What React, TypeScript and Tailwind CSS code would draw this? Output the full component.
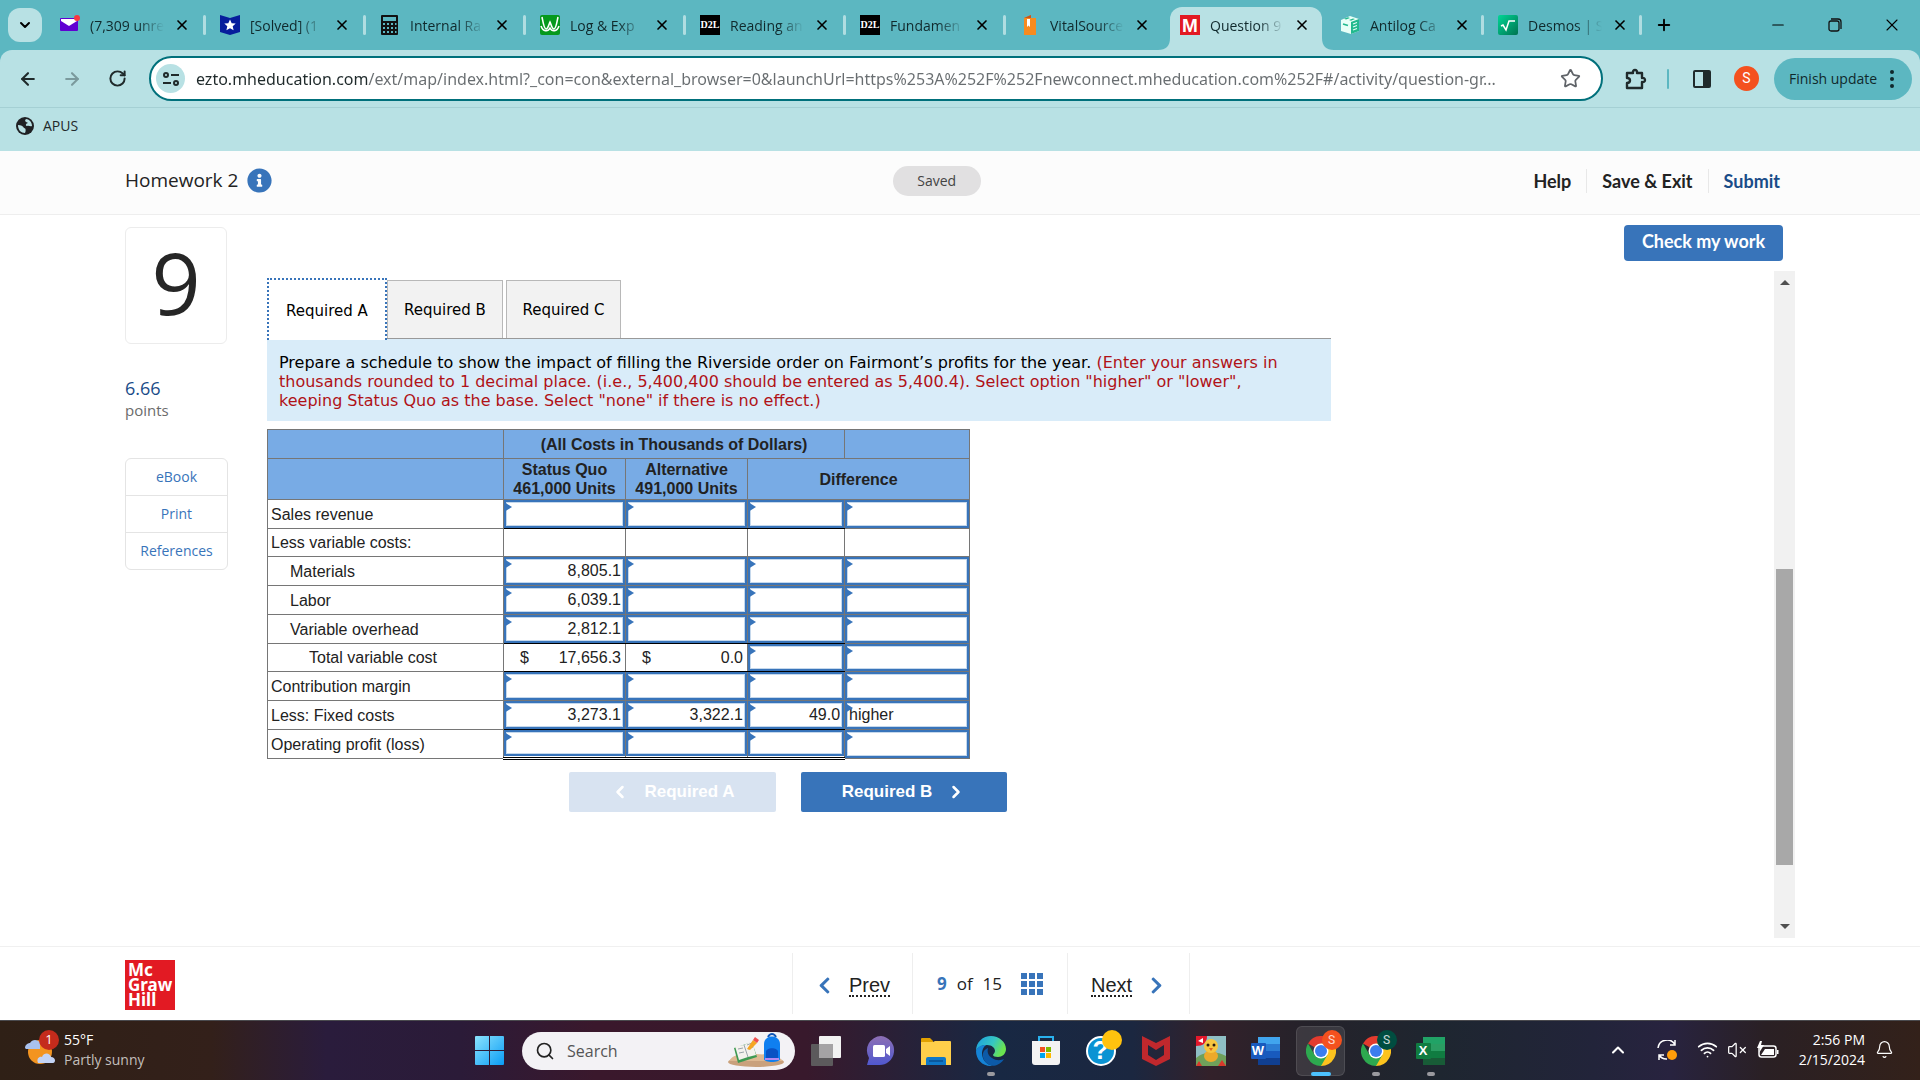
import type { ReactNode } from 'react';
import {
  ArrowLeft,
  ArrowRight,
  Bell,
  ChevronDown,
  ChevronLeft,
  ChevronRight,
  ChevronUp,
  Minus,
  Plus,
  RotateCw,
  Search,
  Star,
  VolumeX,
  Wifi,
  X,
} from 'lucide-react';
import { FaChevronLeft, FaChevronRight, FaInfoCircle } from 'react-icons/fa';

/* ---------- favicons ---------- */

const MailIcon = () => (
  <svg viewBox="0 0 20 20" className="size-5">
    <rect x="0" y="3" width="18" height="13" rx="1" fill="#6001d2" />
    <path d="M1 4h16v2l-8 5-8-5z" fill="#fff" />
    <circle cx="17" cy="3" r="3" fill="#f9363e" />
  </svg>
);

const ShieldIcon = () => (
  <svg viewBox="0 0 20 20" className="size-5">
    <path d="M0 0l10 3L20 0v17l-10 3-10-3z" fill="#071d9c" />
    <path d="M10 4.500l1.700 3.700 4 .4-3 2.700.9 4-3.600-2.100-3.600 2.100.9-4-3-2.700 4-.4z" fill="#fff" />
  </svg>
);

const CalculatorIcon = () => (
  <svg viewBox="0 0 20 20" className="size-5">
    <rect x="1" y="0" width="17" height="20" rx="1" fill="#111" />
    <rect x="3" y="2" width="13" height="4" fill="#5cb7c1" />
    <path
      d="M3 8h2v2H3zM7 8h2v2H7zM11 8h2v2h-2zM15 8h1.500v2H15zM3 12h2v2H3zM7 12h2v2H7zM11 12h2v2h-2zM15 12h1.500v2H15zM3 16h2v2H3zM7 16h2v2H7zM11 16h2v2h-2zM15 16h1.500v2H15z"
      fill="#5cb7c1"
    />
  </svg>
);

const GraphIcon = () => (
  <svg viewBox="0 0 20 20" className="size-5">
    <rect width="20" height="20" rx="2" fill="#05991c" />
    <path d="M2 2c1 5 2 12 4 12s3-5 4-7c1 2 2 7 4 7s3-7 4-12M1 11c2 6 7 6 9 2 2 4 7 4 9-2" fill="none" stroke="#fff" strokeWidth="1.600" />
  </svg>
);

const D2LIcon = () => (
  <span className="flex size-5 items-center justify-center bg-black font-['Liberation_Serif',serif] text-[10px] leading-none font-bold text-white">
    D2L
  </span>
);

const BookIcon = () => (
  <svg viewBox="0 0 20 20" className="size-5">
    <path d="M4 3l7-3v3h5v17H4z" fill="#f68b1f" />
    <path d="M4 3l7-3v3z" fill="#c9541b" />
    <path d="M7 4h3v8l-1.500-1.500L7 12z" fill="#fff" />
  </svg>
);

const McGrawIcon = () => (
  <span className="flex size-5 items-center justify-center bg-[#e21a23] font-['Liberation_Sans',sans-serif] text-[19px] leading-none font-bold text-white">
    M
  </span>
);

const CubeIcon = () => (
  <svg viewBox="0 0 20 20" className="size-5">
    <path d="M1 5l9-4 9 3v12l-8 3-10-3z" fill="#e8fff7" />
    <path d="M11 7l8-3v12l-8 3z" fill="#22b98e" />
    <path d="M4 3.800l4-1.600 2 .8-4 1.600zM9 5l4-1.600 2 .7-4 1.700z" fill="#22b98e" />
    <path d="M13 9l4-1.500M13 12l4-1.500M13 15l4-1.500" stroke="#e8fff7" strokeWidth="1.200" />
    <path d="M3 9l5 1.500" stroke="#22b98e" strokeWidth="1.600" />
  </svg>
);

const DesmosIcon = () => (
  <svg viewBox="0 0 20 20" className="size-5">
    <defs>
      <linearGradient id="desmos" x1="0" y1="0" x2="1" y2="1">
        <stop offset="0" stopColor="#00d796" />
        <stop offset="1" stopColor="#00724f" />
      </linearGradient>
    </defs>
    <rect width="20" height="20" rx="2" fill="url(#desmos)" />
    <path d="M3 11l2-1 3 5 3-9h6" fill="none" stroke="#fff" strokeWidth="1.500" />
  </svg>
);

/* ---------- browser chrome ---------- */

interface BrowserTab {
  title: string;
  icon: ReactNode;
  active?: boolean;
  divider?: boolean;
  narrow?: boolean;
}

const browserTabs: BrowserTab[] = [
  { title: '(7,309 unre', icon: <MailIcon />, divider: true },
  { title: '[Solved] (1', icon: <ShieldIcon />, divider: true },
  { title: 'Internal Ra', icon: <CalculatorIcon />, divider: true },
  { title: 'Log & Exp', icon: <GraphIcon />, divider: true },
  { title: 'Reading an', icon: <D2LIcon />, divider: true },
  { title: 'Fundamen', icon: <D2LIcon />, divider: true },
  { title: 'VitalSource', icon: <BookIcon /> },
  { title: 'Question 9', icon: <McGrawIcon />, active: true },
  { title: 'Antilog Ca', icon: <CubeIcon />, divider: true, narrow: true },
  { title: 'Desmos | S', icon: <DesmosIcon />, divider: true, narrow: true },
];

function TabStrip() {
  return (
    <div className="flex h-[50px] items-stretch bg-[#5cb7c1] pl-2">
      <button aria-label="Search tabs" className="mt-2 mr-1 flex size-[34px] items-center justify-center rounded-xl bg-[#b8e1e4]">
        <ChevronDown className="size-4" strokeWidth={3} />
      </button>
      {browserTabs.map((tab, index) => (
        <div
          key={index}
          className={`relative flex items-center pl-[14px] ${tab.narrow ? 'w-[158px]' : 'w-40'} ${tab.active ? 'before:absolute before:inset-x-1 before:top-[7px] before:bottom-0 before:rounded-t-xl before:bg-[#b8e1e4]' : ''}`}
        >
          {tab.active && (
            <svg viewBox="0 0 176 12" preserveAspectRatio="none" className="absolute -left-2 bottom-0 h-3 w-44">
              <path d="M0 12c8 0 12-4 12-12h152c0 8 4 12 12 12z" fill="#b8e1e4" />
            </svg>
          )}
          <span className="relative flex shrink-0">{tab.icon}</span>
          <span className="relative ml-[10px] w-[74px] text-[14px] whitespace-nowrap text-[#10292c] [mask-image:linear-gradient(to_right,black_65%,transparent)]">
            {tab.title}
          </span>
          <button aria-label={`Close ${tab.title}`} className="relative ml-[10px] flex size-4 items-center justify-center">
            <X className="size-4" strokeWidth={2.5} />
          </button>
          {tab.divider && <span className="ml-auto h-5 w-[3px] rounded bg-[#b0dde1]" />}
        </div>
      ))}
      <button aria-label="New tab" className="ml-3 flex w-5 items-center justify-center">
        <Plus className="size-[18px]" strokeWidth={2.5} />
      </button>
      <div className="ml-auto flex shrink-0">
        <button aria-label="Minimize" className="flex w-[57px] items-center justify-center">
          <Minus className="size-[18px]" strokeWidth={1.5} />
        </button>
        <button aria-label="Restore" className="flex w-[57px] items-center justify-center">
          <svg viewBox="0 0 14 14" className="size-[14px]" fill="none" stroke="#111" strokeWidth="1.300">
            <rect x="1" y="3" width="10" height="10" rx="2" />
            <path d="M3 1h7a3 3 0 0 1 3 3v7" />
          </svg>
        </button>
        <button aria-label="Close" className="flex w-[57px] items-center justify-center">
          <X className="size-5" strokeWidth={1.3} />
        </button>
      </div>
    </div>
  );
}

const address =
  'ezto.mheducation.com/ext/map/index.html?_con=con&external_browser=0&launchUrl=https%253A%252F%252Fnewconnect.mheducation.com%252F#/activity/question-gr...';

function Toolbar() {
  return (
    <div className="bg-[#5cb7c1]">
      <div className="rounded-t-xl bg-[#b8e1e4]">
        <div className="flex h-[58px] items-center border-b border-[#a5d0d4] pr-2 pl-4">
          <button aria-label="Back" className="flex w-6 justify-center text-[#1f2a2b]">
            <ArrowLeft className="size-5" strokeWidth={2.5} />
          </button>
          <button aria-label="Forward" className="ml-5 flex w-6 justify-center text-[#7b9a9d]">
            <ArrowRight className="size-5" strokeWidth={2.5} />
          </button>
          <button aria-label="Reload" className="ml-[21px] flex w-6 justify-center text-[#1f2a2b]">
            <RotateCw className="size-[19px]" strokeWidth={2.5} />
          </button>
          <div className="ml-5 flex h-[45px] flex-1 items-center rounded-full border-2 border-[#00707b] bg-white pr-5 pl-[5px]">
            <button aria-label="Site information" className="flex size-[29px] shrink-0 items-center justify-center rounded-full bg-[#b8e1e4]">
              <svg viewBox="0 0 18 16" className="h-4 w-[18px]" fill="none" stroke="#1f2a2b" strokeWidth="2">
                <circle cx="4" cy="4" r="2" />
                <path d="M9 4h8M1 12h8" />
                <circle cx="14" cy="12" r="2" />
              </svg>
            </button>
            <input
              aria-label="Address"
              defaultValue={address}
              className="ml-[11px] w-0 flex-1 bg-[linear-gradient(to_right,#1f2a2b_173px,#686d70_173px)] bg-clip-text font-['Noto_Sans',sans-serif] text-[16px] text-transparent outline-none"
            />
            <button aria-label="Bookmark this page">
              <Star className="size-[21px] text-[#5f6368]" />
            </button>
          </div>
          <button aria-label="Extensions" className="ml-[21px] flex w-6 justify-center">
            <svg viewBox="0 0 22 22" className="size-[22px]" fill="none" stroke="#1f2a2b" strokeWidth="2.400" strokeLinejoin="round">
              <path d="M2 5h6c-1-4 5-4 4 0h5v5c4-1 4 5 0 4v6H2v-5c4 0 4-5 0-5z" />
            </svg>
          </button>
          <span className="mx-[19px] h-5 w-[2px] rounded bg-[#5cb7c1]" />
          <button aria-label="Side panel" className="ml-[2px] flex w-6 justify-center">
            <svg viewBox="0 0 18 18" className="size-[18px]">
              <rect x="1" y="1" width="16" height="16" rx="1" fill="none" stroke="#1f2a2b" strokeWidth="2" />
              <rect x="10" y="1" width="7" height="16" fill="#1f2a2b" />
            </svg>
          </button>
          <button className="ml-5 flex size-[25px] items-center justify-center rounded-full bg-[#f4511e] font-[Roboto,sans-serif] text-[14px] text-white">
            S
          </button>
          <button className="ml-[15px] flex h-[42px] w-[138px] items-center justify-between rounded-full bg-[#5cb7c1] pr-[18px] pl-[15px] text-[14px] whitespace-nowrap text-[#10292c]">
            Finish update
            <svg viewBox="0 0 4 20" className="h-5 w-1" fill="#10292c">
              <circle cx="2" cy="3" r="2" />
              <circle cx="2" cy="10" r="2" />
              <circle cx="2" cy="17" r="2" />
            </svg>
          </button>
        </div>
        <div className="flex h-[43px] items-center pb-2 pl-4">
          <a href="#apus" className="flex items-center gap-[9px] text-[14px] text-[#1f2a2b]">
            <svg viewBox="0 0 18 18" className="size-[18px]">
              <circle cx="9" cy="9" r="9" fill="#1f2124" />
              <path d="M2 8c3 0 5 1 6 3 2 0 2 3 1 5-4 0-7-3-7-8z" fill="#b8e1e4" />
              <path d="M10 2c3 0 6 3 6 7-2 1-3-1-5 0-2 0-1-3 1-3-2-1-4-2-2-4z" fill="#b8e1e4" />
            </svg>
            APUS
          </a>
        </div>
      </div>
    </div>
  );
}

/* ---------- assignment ---------- */

function AssignmentHeader() {
  return (
    <header className="grid h-16 grid-cols-3 items-center border-b border-[#eeeeee] bg-[#fcfcfc] px-[125px] pb-1">
      <div className="flex items-center gap-[9px]">
        <h1 className="text-[19px] text-[#222]">Homework 2</h1>
        <button aria-label="Assignment information">
          <FaInfoCircle className="size-[25px] text-[#3874ba]" />
        </button>
      </div>
      <span className="ml-[211px] flex h-[30px] w-[88px] items-center justify-center rounded-full bg-[#e1e0e1] text-[14px] text-[#444]">
        Saved
      </span>
      <nav className="flex items-center justify-end pr-[15px] font-[Lato,sans-serif] text-[18px] leading-6 font-bold text-[#222]">
        <a href="#help" className="border-r border-[#e8e8e8] pr-[15px]">Help</a>
        <a href="#exit" className="border-r border-[#e8e8e8] px-[15px]">Save &amp; Exit</a>
        <a href="#submit" className="pl-[15px] text-[#1a4c88]">Submit</a>
      </nav>
    </header>
  );
}

function QuestionInfo() {
  return (
    <aside className="w-[103px] shrink-0 pt-3">
      <div className="flex h-[117px] w-[102px] items-center justify-center rounded-md border border-[#ececec] pb-2 text-[86px] leading-none text-[#262626]">
        9
      </div>
      <p className="mt-8 text-[18px] leading-6 text-[#1a4c88]">6.66</p>
      <p className="text-[15px] leading-5 text-[#6b6b6b]">points</p>
      <div className="mt-[38px] divide-y divide-[#e4e4e4] rounded-md border border-[#e4e4e4] text-center text-[14px] leading-9 text-[#3874ba]">
        <a href="#ebook" className="block">eBook</a>
        <a href="#print" className="block">Print</a>
        <a href="#references" className="block">References</a>
      </div>
    </aside>
  );
}

interface AnswerCellProps {
  label: string;
  value?: string;
  align: 'left' | 'right';
  rule: string;
  height: string;
}

function AnswerCell({ label, value = '', align, rule, height }: AnswerCellProps) {
  return (
    <td className={`relative border border-[#767676] p-0 align-top ${rule}`}>
      <input
        aria-label={label}
        defaultValue={value}
        className={`block w-full border-2 border-[#3874ba] bg-white px-[2px] shadow-[inset_0_0_0_1px_#c5d8ec] outline-none ${height} ${align === 'left' ? 'text-left' : 'text-right'}`}
      />
      <span className="absolute top-[2px] left-0 border-y-[5px] border-l-[8px] border-y-transparent border-l-[#3874ba]" />
    </td>
  );
}

function TotalCell({ value, rule }: { value: string; rule: string }) {
  return (
    <td className={`border border-[#767676] p-0 pr-1 pl-4 ${rule}`}>
      <div className="flex justify-between">
        <span>$</span>
        <span>{value}</span>
      </div>
    </td>
  );
}

interface ScheduleRow {
  label: string;
  indent?: string;
  kind?: 'blank' | 'total' | 'last';
  values?: string[];
  rule?: string;
}

const rows: ScheduleRow[] = [
  { label: 'Sales revenue', rule: 'border-b-black' },
  { label: 'Less variable costs:', kind: 'blank' },
  { label: 'Materials', indent: 'pl-[22px]', values: ['8,805.1'] },
  { label: 'Labor', indent: 'pl-[22px]', values: ['6,039.1'] },
  { label: 'Variable overhead', indent: 'pl-[22px]', values: ['2,812.1'], rule: 'border-b-black' },
  { label: 'Total variable cost', indent: 'pl-[41px]', kind: 'total', values: ['17,656.3', '0.0'], rule: 'border-b-black' },
  { label: 'Contribution margin' },
  { label: 'Less: Fixed costs', values: ['3,273.1', '3,322.1', '49.0', 'higher'], rule: 'border-b-black' },
  { label: 'Operating profit (loss)', kind: 'last', rule: 'border-b-[3px] border-b-black [border-bottom-style:double]' },
];

const columns = ['Status Quo', 'Alternative', 'Difference', 'Effect'];

const inputHeights = { blank: 'h-[27px]', total: 'h-[27px]', last: 'h-[26px]', normal: 'h-7' };

function ScheduleTable() {
  return (
    <table className="mt-2 w-[703px] table-fixed border-collapse font-['Liberation_Sans',sans-serif] text-[16px] leading-[19px] text-[#222]">
      <colgroup>
        <col className="w-[236px]" />
        <col className="w-[122px]" />
        <col className="w-[122px]" />
        <col className="w-[97px]" />
        <col className="w-[125px]" />
      </colgroup>
      <thead className="bg-[#78abe5]">
        <tr className="h-[29px]">
          <td className="border border-[#767676]" />
          <th colSpan={3} className="border border-[#767676] p-0">(All Costs in Thousands of Dollars)</th>
          <td className="border border-[#767676]" />
        </tr>
        <tr className="h-[41px]">
          <td className="border border-[#767676]" />
          <th className="border border-[#767676] p-0">Status Quo 461,000 Units</th>
          <th className="border border-[#767676] p-0">Alternative 491,000 Units</th>
          <th colSpan={2} className="border border-[#767676] p-0">Difference</th>
        </tr>
      </thead>
      <tbody>
        {rows.map(row => (
          <tr key={row.label} className={row.kind ? 'h-7' : 'h-[29px]'}>
            <th scope="row" className={`border border-[#767676] p-0 text-left font-normal ${row.indent ?? 'pl-[3px]'}`}>
              {row.label}
            </th>
            {columns.map((column, i) => {
              const rule = i < 3 ? row.rule ?? '' : '';
              if (row.kind === 'blank') {
                return <td key={column} className="border border-[#767676]" />;
              }
              if (row.kind === 'total' && i < 2) {
                return <TotalCell key={column} value={row.values?.[i] ?? ''} rule={rule} />;
              }
              return (
                <AnswerCell
                  key={column}
                  label={`${row.label} ${column}`}
                  value={row.kind === 'total' ? '' : row.values?.[i]}
                  align={i === 3 ? 'left' : 'right'}
                  rule={rule}
                  height={i === 3 && row.kind === 'last' ? 'h-7' : inputHeights[row.kind ?? 'normal']}
                />
              );
            })}
          </tr>
        ))}
      </tbody>
    </table>
  );
}

function QuestionBody() {
  return (
    <main className="w-[1064px] pt-[7px]">
      <div role="tablist" className="flex border-b border-[#999] font-['DejaVu_Sans',sans-serif] text-[15px] text-black">
        <button role="tab" aria-selected="true" className="-mb-[2px] h-[62px] w-[120px] border-2 border-b-0 border-dotted border-[#3874ba] bg-white pt-[2px]">
          Required A
        </button>
        <button role="tab" aria-selected="false" className="mt-[2px] h-[58px] w-[116px] border border-b-0 border-[#b8b8b8] bg-[#f2f2f2] pt-[2px]">
          Required B
        </button>
        <button role="tab" aria-selected="false" className="mt-[2px] ml-[3px] h-[58px] w-[115px] border border-b-0 border-[#b8b8b8] bg-[#f2f2f2] pt-[2px]">
          Required C
        </button>
      </div>
      <p className="h-[82px] bg-[#d9ecf9] pt-[14px] pr-8 pl-3 font-['DejaVu_Sans',sans-serif] text-[16px] leading-[19px] text-black">
        Prepare a schedule to show the impact of filling the Riverside order on Fairmont’s profits for the year.{' '}
        <span className="text-[#b01217]">
          (Enter your answers in thousands rounded to 1 decimal place. (i.e., 5,400,400 should be entered as 5,400.4). Select
          option "higher" or "lower", keeping Status Quo as the base. Select "none" if there is no effect.)
        </span>
      </p>
      <ScheduleTable />
      <div className="mt-3 ml-[302px] flex gap-[25px] font-['Liberation_Sans',sans-serif] text-[17px] font-bold text-white">
        <button disabled className="flex h-10 w-[207px] items-center justify-center gap-[14px] rounded-xs bg-[#d8e3f1]">
          <ChevronLeft className="size-5" strokeWidth={3} />
          Required A
        </button>
        <button className="flex h-10 w-[206px] items-center justify-center gap-[14px] rounded-xs bg-[#3874ba]">
          Required B
          <ChevronRight className="size-5" strokeWidth={3} />
        </button>
      </div>
    </main>
  );
}

function ScrollTrack() {
  return (
    <div className="flex w-[21px] flex-col items-center bg-[#f1f1f1]">
      <span className="mt-[9px] border-x-[5px] border-b-[5px] border-x-transparent border-b-[#505050]" />
      <span className="grow-[284]" />
      <span className="w-[17px] grow-[296] bg-[#a8a8a8]" />
      <span className="grow-[59]" />
      <span className="mb-[9px] border-x-[5px] border-t-[5px] border-x-transparent border-t-[#505050]" />
    </div>
  );
}

function AssignmentFooter() {
  return (
    <footer className="grid h-[74px] grid-cols-[1fr_auto_1fr] border-t border-[#f0f0f0] bg-white px-[125px]">
      <div className="mt-[13px] flex size-[50px] flex-col justify-center bg-[#e21a23] pb-[2px] pl-[3px] font-['Noto_Sans',sans-serif] text-[17px] leading-[15px] font-bold text-white">
        <span>Mc</span>
        <span>Graw</span>
        <span>Hill</span>
      </div>
      <nav className="my-[6px] ml-[62px] flex items-stretch divide-x divide-[#eeeeee] border-x border-[#eeeeee] font-['Liberation_Sans',sans-serif] text-[20px] text-[#222]">
        <a href="#prev" className="flex w-[120px] items-center justify-center gap-[15px] pt-1">
          <FaChevronLeft className="size-[19px] text-[#3874ba]" />
          <span className="border-b-2 border-dotted border-[#222] leading-5">Prev</span>
        </a>
        <div className="flex w-[155px] items-center justify-center gap-[10px] font-['Open_Sans',sans-serif] text-[17px]">
          <b className="text-[#3874ba]">9</b>
          <span>of</span>
          <span>15</span>
          <button aria-label="Question list" className="ml-[9px] grid grid-cols-3 gap-[2px]">
            {Array.from({ length: 9 }, (_, i) => (
              <span key={i} className="size-[6px] bg-[#3874ba]" />
            ))}
          </button>
        </div>
        <a href="#next" className="flex w-[121px] items-center justify-center gap-[15px] pt-1">
          <span className="border-b-2 border-dotted border-[#222] leading-5">Next</span>
          <FaChevronRight className="size-[19px] text-[#3874ba]" />
        </a>
      </nav>
    </footer>
  );
}

/* ---------- taskbar ---------- */

const WindowsIcon = () => (
  <svg viewBox="0 0 30 30" className="size-[30px]">
    <defs>
      <linearGradient id="win" x1="0" y1="0" x2="1" y2="1">
        <stop offset="0" stopColor="#8be3fd" />
        <stop offset="1" stopColor="#0a9cf5" />
      </linearGradient>
    </defs>
    <path d="M0 1a1 1 0 0 1 1-1h13v14H0zM15 0h13a1 1 0 0 1 1 1v13H15zM0 15h14v14H1a1 1 0 0 1-1-1zM15 15h14v13a1 1 0 0 1-1 1H15z" fill="url(#win)" />
  </svg>
);

const BackpackArt = () => (
  <svg viewBox="0 0 60 36" className="h-9 w-[60px]">
    <ellipse cx="29" cy="29" rx="28" ry="5" fill="#c9a17c" />
    <path d="M2 28c4-7 14-8 26-7s20-1 28 7z" fill="#deb992" />
    <path d="M7 15l18-6 5 15-19 6z" fill="#3e9a52" />
    <path d="M8 13l9-1 8-4 4 14-8 2-9 3z" fill="#f4f2ee" />
    <path d="M17 12l4 12M11 16l5-1M12 20l5-1M20 12l5-2M21 16l5-2" stroke="#9aa4ab" />
    <path d="M20 16l6-9 4 3-7 7z" fill="#f5a623" />
    <path d="M26 7l2-3 4 3-2 3z" fill="#ee4e4e" />
    <path d="M41 4c2-4 6-4 8 0" fill="none" stroke="#1257b8" strokeWidth="2" />
    <path d="M37 11c0-10 16-10 16 0v15c0 4-16 4-16 0z" fill="#0f7ff0" />
    <path d="M39 19c0-5 12-5 12 0v6H39z" fill="#0a52c4" />
    <path d="M38 25h14v2H38z" fill="#b58af0" />
  </svg>
);

const TaskViewIcon = () => (
  <svg viewBox="0 0 30 30" className="size-[30px]">
    <rect x="8" y="0" width="22" height="22" rx="1" fill="#f2f2f2" />
    <rect x="0" y="8" width="22" height="22" rx="1" fill="#5c5a5c" />
    <rect x="8" y="8" width="14" height="14" fill="#a5a3a5" />
  </svg>
);

const ChatIcon = () => (
  <svg viewBox="0 0 30 30" className="size-[30px]">
    <defs>
      <linearGradient id="chat" x1="0" y1="0" x2="0" y2="1">
        <stop offset="0" stopColor="#8d6fb4" />
        <stop offset="1" stopColor="#5058cf" />
      </linearGradient>
    </defs>
    <path d="M15 0a14.500 14.500 0 1 1-3 29H1l2-7A14.500 14.500 0 0 1 15 0z" fill="url(#chat)" />
    <rect x="7" y="9" width="12" height="12" rx="1.500" fill="#fff" />
    <path d="M20 13l4-3v10l-4-3z" fill="#fff" />
  </svg>
);

const ExplorerIcon = () => (
  <svg viewBox="0 0 30 30" className="size-[30px]">
    <path d="M0 3a1 1 0 0 1 1-1h8l3 3v5H0z" fill="#e2a100" />
    <path d="M0 6h12l2-1h15a1 1 0 0 1 1 1v23H0z" fill="#ffcf4a" />
    <path d="M5 29v-6a2 2 0 0 1 2-2h16a2 2 0 0 1 2 2v6z" fill="#0f78c8" />
    <path d="M8 25h14" stroke="#0a4f90" strokeWidth="1.500" />
  </svg>
);

const EdgeIcon = () => (
  <svg viewBox="0 0 30 30" className="size-[30px]">
    <defs>
      <linearGradient id="edge-top" x1="0" y1="0" x2="1" y2=".4">
        <stop offset="0" stopColor="#1b9de2" />
        <stop offset=".6" stopColor="#36c6c2" />
        <stop offset="1" stopColor="#6be34f" />
      </linearGradient>
    </defs>
    <path d="M0 15C0 6 7 0 15 0s15 6 15 13c0 5-4 8-8 8-3 0-5-1-5-2s2-2 2-4c0-3-3-6-8-6-6 0-10 3-11 6z" fill="url(#edge-top)" />
    <path d="M0 15c1-4 5-6 10-6-3 2-4 6-4 8 0 7 5 12 11 12.800C7 31 0 24 0 15z" fill="#1583d6" />
    <path d="M12 12c-3 1-6 4-5 9 1 5 6 9 11 8.700 4-.5 8-3 10-6.700-3 1.500-8 2-12-1-4-2.500-5-6-4-10z" fill="#0c5aa8" />
  </svg>
);

const StoreIcon = () => (
  <svg viewBox="0 0 30 30" className="size-[30px]">
    <path d="M8 6V1h14v5" fill="none" stroke="#29b1ee" strokeWidth="2" />
    <path d="M1 5h28v21a3 3 0 0 1-3 3H4a3 3 0 0 1-3-3z" fill="#f3f3f3" />
    <rect x="9" y="11" width="5" height="5" fill="#f25022" />
    <rect x="15" y="11" width="5" height="5" fill="#7fba00" />
    <rect x="9" y="17" width="5" height="5" fill="#00a4ef" />
    <rect x="15" y="17" width="5" height="5" fill="#ffb900" />
  </svg>
);

const HelpIcon = () => (
  <span className="relative flex size-[30px] items-center justify-center rounded-full border-2 border-white bg-[#0a93d3] font-['Liberation_Sans',sans-serif] text-[26px] font-bold text-white">
    ?
    <span className="absolute -top-2 -right-2 size-5 rounded-full bg-[#ffc20e]" />
  </span>
);

const McAfeeIcon = () => (
  <svg viewBox="0 0 30 30" className="size-[30px]">
    <path d="M1 0l14 7 14-7v23l-14 7-14-7zM7 9v10l8 5 8-5V9l-8 5z" fill="#c0282d" fillRule="evenodd" />
  </svg>
);

const ChickIcon = () => (
  <svg viewBox="0 0 30 30" className="size-[30px]">
    <rect width="30" height="30" fill="#8fbfc4" />
    <path d="M0 22c6-6 20-8 30-2v10H0z" fill="#6fa05a" />
    <path d="M0 0h11c0 7-4 10-11 10z" fill="#e3182b" />
    <path d="M2 5l5-3v5z" fill="#fff" />
    <ellipse cx="15" cy="20" rx="7" ry="6" fill="#eca92b" />
    <circle cx="15" cy="10" r="7" fill="#f7c640" />
    <circle cx="12" cy="9" r="1.500" fill="#2b1a10" />
    <circle cx="18" cy="9" r="1.500" fill="#2b1a10" />
    <path d="M13 12h4l-2 3z" fill="#e0631c" />
    <path d="M0 30l3-5 3 5zM22 30l4-6 4 6z" fill="#d8392c" />
  </svg>
);

function OfficeIcon({ letter, shades }: { letter: string; shades: string[] }) {
  return (
    <span className="relative flex size-[30px] items-center">
      <svg viewBox="0 0 30 30" className="absolute inset-0 size-[30px]">
        {shades.slice(0, 4).map((shade, i) => (
          <rect key={shade} x="7" y={1 + i * 7} width="22" height="7" fill={shade} />
        ))}
        <rect x="0" y="7" width="15" height="16" rx="1" fill={shades[4]} />
      </svg>
      <span className="relative w-[15px] text-center font-['Liberation_Sans',sans-serif] text-[13px] leading-none font-bold text-white">
        {letter}
      </span>
    </span>
  );
}

function ChromeIcon({ badge }: { badge: 'orange' | 'green' }) {
  return (
    <span className="relative flex size-[30px]">
      <svg viewBox="0 0 30 30" className="size-[30px]">
        <path d="M15 15L2 7.500A15 15 0 0 1 28 7.500H15z" fill="#e33b2e" />
        <path d="M15 15V7.500h13A15 15 0 0 1 15 30z" fill="#fcc31e" />
        <path d="M15 30A15 15 0 0 1 2 7.500l6.500 11.300L15 22l6.500-3.200z" fill="#2da94f" />
        <circle cx="15" cy="15" r="7.500" fill="#fff" />
        <circle cx="15" cy="15" r="6" fill="#3b7ded" />
      </svg>
      <span
        className={`absolute -top-[6px] -right-[6px] flex size-5 items-center justify-center rounded-full font-[Roboto,sans-serif] text-[12px] text-white/80 ${badge === 'orange' ? 'bg-[#f4511e]' : 'bg-[#004d40]'}`}
      >
        S
      </span>
    </span>
  );
}

interface TaskbarApp {
  name: string;
  icon: ReactNode;
  state?: 'open' | 'focused';
}

const taskbarApps: TaskbarApp[] = [
  { name: 'Task view', icon: <TaskViewIcon /> },
  { name: 'Chat', icon: <ChatIcon /> },
  { name: 'File Explorer', icon: <ExplorerIcon /> },
  { name: 'Edge', icon: <EdgeIcon />, state: 'open' },
  { name: 'Store', icon: <StoreIcon /> },
  { name: 'Help', icon: <HelpIcon /> },
  { name: 'McAfee', icon: <McAfeeIcon /> },
  { name: 'Game', icon: <ChickIcon /> },
  { name: 'Word', icon: <OfficeIcon letter="W" shades={['#41a5ee', '#2b7cd3', '#185abd', '#103f91', '#185abd']} /> },
  { name: 'Chrome', icon: <ChromeIcon badge="orange" />, state: 'focused' },
  { name: 'Chrome second profile', icon: <ChromeIcon badge="green" />, state: 'open' },
  { name: 'Excel', icon: <OfficeIcon letter="X" shades={['#21a366', '#2a9d62', '#107c41', '#185c37', '#107c41']} />, state: 'open' },
];

function Taskbar() {
  return (
    <div className="grid h-[60px] grid-cols-[1fr_auto_1fr] items-center border-t border-[#4a4a4e] bg-[linear-gradient(to_right,#2f2016_0%,#33201a_11%,#2a1c3c_17%,#2b1b38_24%,#3a182c_31%,#38192c_42%,#182843_52%,#1b2740_59%,#33212a_63%,#25222a_68%,#1e2630_75%,#22243a_83%,#28233f_87%,#2a2024_92%,#33211a_100%)] text-white">
      <div className="flex items-center pb-[2px] pl-6">
        <div className="relative mr-[6px] size-[34px]">
          <svg viewBox="0 0 34 34" className="size-[34px]">
            <circle cx="16" cy="19" r="12" fill="#f39420" />
            <path d="M1 15c0-4 4-5 5-5 2-4 8-4 10 0v6H2z" fill="#a9c1ee" />
            <path d="M14 30c-2-5 2-7 4-6 2-5 8-4 9 0 5 0 5 6 2 6z" fill="#c3d3f5" />
          </svg>
          <span className="absolute -top-[3px] left-[15px] flex size-5 items-center justify-center rounded-full bg-[#c42b1c] text-[13px]">1</span>
        </div>
        <div className="text-[14px] leading-5">
          <p>55°F</p>
          <p className="text-[#c3bfbc]">Partly sunny</p>
        </div>
      </div>

      <div className="flex items-stretch">
        <button aria-label="Start" className="flex w-[55px] items-center justify-center">
          <WindowsIcon />
        </button>
        <label className="mr-[3px] ml-[5px] flex h-[38px] w-[273px] items-center self-center rounded-full bg-[#f3f2f5] pr-2 pl-[13px]">
          <Search className="size-5 text-[#222]" />
          <input aria-label="Search" placeholder="Search" className="ml-3 w-0 flex-1 text-[16px] text-[#222] outline-none placeholder:text-[#555]" />
          <BackpackArt />
        </label>
        <div className="flex">
          {taskbarApps.map(app => (
            <button
              key={app.name}
              aria-label={app.name}
              className={`relative flex h-[50px] w-[55px] items-center justify-center ${app.state === 'focused' ? 'before:absolute before:inset-x-[3px] before:inset-y-0 before:rounded-md before:border before:border-white/10 before:bg-white/10' : ''}`}
            >
              {app.icon}
              {app.state && (
                <span
                  className={`absolute bottom-0 h-1 rounded-full ${app.state === 'focused' ? 'w-5 bg-[#4cc2ff]' : 'w-2 bg-[#9a9a9f]'}`}
                />
              )}
            </button>
          ))}
        </div>
      </div>

      <div className="flex items-center justify-end pr-[26px] pb-[2px]">
        <ChevronUp className="mr-[29px] size-5" strokeWidth={2.5} />
        <div className="relative mr-[20px]">
          <svg viewBox="0 0 20 20" className="size-5" fill="none" stroke="#fff" strokeWidth="1.500">
            <path d="M1 8a9 9 0 0 1 17-3M18 0v5h-5M2 20v-5h5M2 15a9 9 0 0 0 8 4" />
          </svg>
          <span className="absolute top-[10px] left-[10px] size-[10px] rounded-full bg-[#ff9d0a]" />
        </div>
        <Wifi className="mr-[9px] size-[21px]" />
        <VolumeX className="mr-[10px] size-[20px]" strokeWidth={1.5} />
        <svg viewBox="0 0 22 18" className="mr-5 h-[18px] w-[22px]">
          <rect x="2" y="5" width="17" height="11" rx="2.500" fill="none" stroke="#fff" strokeWidth="1.500" />
          <path d="M8 8h9v6H4z" fill="#fff" />
          <path d="M20 9h1.500v4H20z" fill="#fff" />
          <path d="M3 0l-3 7h3l-1 5 5-8H4l1-4z" fill="#fff" />
        </svg>
        <div className="text-right text-[14px] leading-5">
          <p>2:56 PM</p>
          <p>2/15/2024</p>
        </div>
        <Bell className="ml-[10px] size-[19px]" strokeWidth={1.5} />
      </div>
    </div>
  );
}

export default function App() {
  return (
    <div className="flex min-h-screen flex-col bg-white font-['Open_Sans','Noto_Sans',sans-serif]">
      <TabStrip />
      <Toolbar />
      <AssignmentHeader />
      <div className="flex flex-1 px-[125px] pb-2">
        <QuestionInfo />
        <div className="ml-[39px] flex flex-1 flex-col">
          <div className="flex justify-end pt-[10px] pr-3">
            <button className="h-9 w-[159px] rounded-sm bg-[#3874ba] pb-1 font-[Lato,sans-serif] text-[18px] font-bold text-white">
              Check my work
            </button>
          </div>
          <div className="mt-[10px] flex flex-1 justify-between">
            <QuestionBody />
            <ScrollTrack />
          </div>
        </div>
      </div>
      <AssignmentFooter />
      <Taskbar />
    </div>
  );
}
